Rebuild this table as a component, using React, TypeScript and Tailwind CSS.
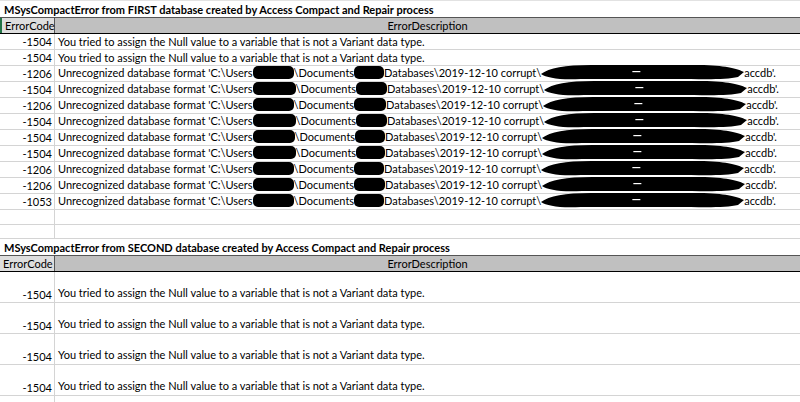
const NULL_MSG = "You tried to assign the Null value to a variable that is not a Variant data type.";

type Row = { code: string; user: number; docs: number };

const firstRows: (Row | null)[] = [
  null,
  null,
  { code: "-1206", user: 41, docs: 30 },
  { code: "-1504", user: 43, docs: 31 },
  { code: "-1206", user: 41, docs: 32 },
  { code: "-1504", user: 43, docs: 31 },
  { code: "-1504", user: 42, docs: 30 },
  { code: "-1504", user: 43, docs: 29 },
  { code: "-1206", user: 41, docs: 30 },
  { code: "-1206", user: 41, docs: 31 },
  { code: "-1053", user: 41, docs: 30 },
];

function Blob({ w }: { w: number }) {
  // redaction scribble
  return (
    <svg width={w} height={17} viewBox={`0 0 ${w} 17`} preserveAspectRatio="none" className="inline-block align-[-4px]">
      <path
        d={`M0 10 C8 4 24 1 50 1 L${w - 40} 1 C${w - 16} 2 ${w - 6} 5 ${w} 8 L${w - 6} 13 C${w - 18} 16 ${w - 40} 15 ${w - 70} 15 L40 15 C18 16 6 14 0 10 Z`}
        fill="black"
      />
      <rect x={w * 0.45} y={7} width={8} height={1.2} fill="white" />
    </svg>
  );
}

function Smudge({ w }: { w: number }) {
  return <span className="inline-block h-[13px] bg-black rounded-[5px] align-[-2px]" style={{ width: w }} />;
}

function DataRow({ code, children, h = "h-[16px]" }: { code: string; children: React.ReactNode; h?: string }) {
  return (
    <div className={`flex items-end ${h} border-b border-[#d4d4d4]`}>
      <div className="w-[55px] h-full flex items-end justify-end pr-[2px] border-r border-[#d4d4d4] leading-[15px]">{code}</div>
      <div className="flex-1 pl-[3px] whitespace-nowrap leading-[15px]">{children}</div>
    </div>
  );
}

function Header({ green }: { green?: boolean }) {
  return (
    <div className="flex h-[17px] border-t border-b border-t-[#555] border-b-black">
      <div className={`w-[55px] flex items-end pl-[3px] bg-[#dedede] border-r border-[#555] leading-[15px] ${green ? "border-l-2 border-l-[#217346]" : ""}`}>
        ErrorCode
      </div>
      <div className="flex-1 bg-[#c0c0c0] text-center leading-[15px] flex items-end justify-center">ErrorDescription</div>
    </div>
  );
}

function Title({ children }: { children: React.ReactNode }) {
  return <div className="h-[16px] flex items-end pl-[4px] font-bold leading-[15px] whitespace-nowrap">{children}</div>;
}

export default function App() {
  return (
    <div className="w-[800px] h-[402px] overflow-hidden bg-white text-black text-[11px] [font-family:Lato,'Open_Sans',sans-serif]">
      <div className="h-[1px] bg-[#e2e2e2]" />
      <Title>MSysCompactError from FIRST database created by Access Compact and Repair process</Title>
      <Header green />
      {firstRows.map((r, i) =>
        r === null ? (
          <DataRow key={i} code="-1504">{NULL_MSG}</DataRow>
        ) : (
          <DataRow key={i} code={r.code}>
            Unrecognized database format 'C:\Users
            <Smudge w={r.user} />
            \Documents
            <Smudge w={r.docs} />
            Databases\2019-12-10 corrupt\
            <Blob w={203} />
            accdb'.
          </DataRow>
        )
      )}
      <DataRow code="" h="h-[15px]">{""}</DataRow>
      <DataRow code="" h="h-[14px]">{""}</DataRow>
      <Title>MSysCompactError from SECOND database created by Access Compact and Repair process</Title>
      <Header />
      {[0, 1, 2, 3].map((i) => (
        <DataRow key={i} code="-1504" h="h-[31px]">
          <span className="block pb-[2px]">{NULL_MSG}</span>
        </DataRow>
      ))}
      <DataRow code="" h="h-[16px]">{""}</DataRow>
    </div>
  );
}
